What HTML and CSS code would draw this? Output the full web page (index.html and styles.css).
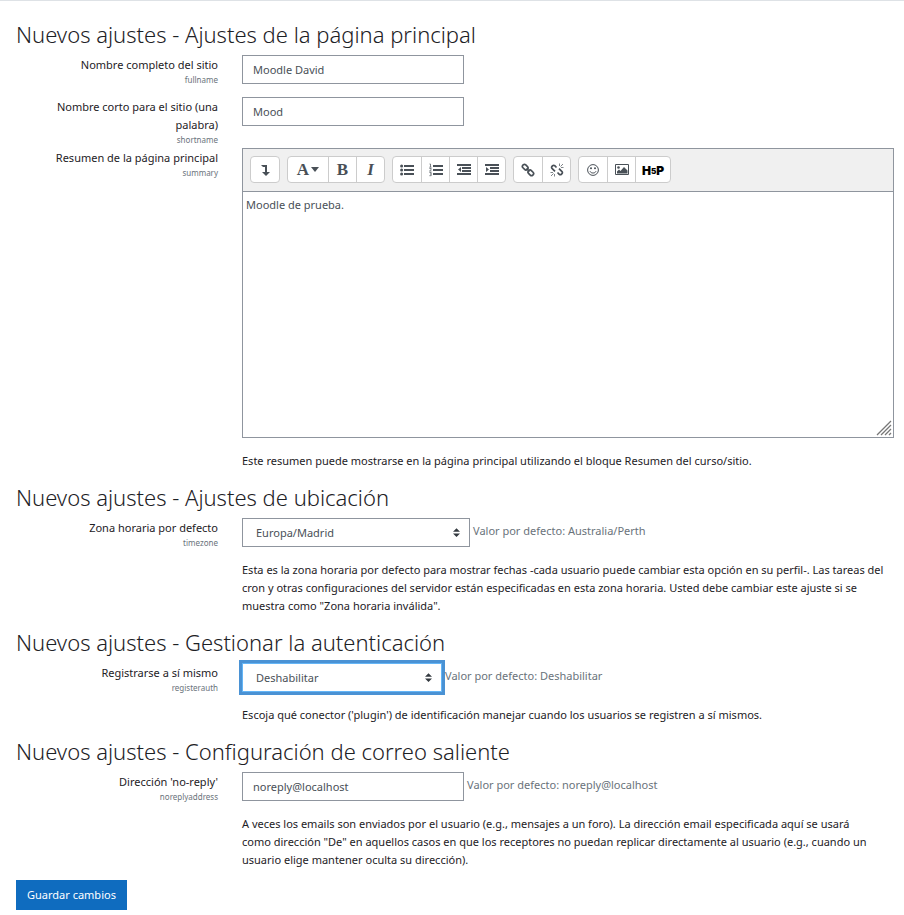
FILE: index.html
```html
<!DOCTYPE html>
<html lang="es">
<head>
<meta charset="utf-8">
<meta name="viewport" content="width=device-width, initial-scale=1">
<title>Nuevos ajustes</title>
<link rel="stylesheet" href="styles.css">
</head>
<body>
<form class="settings">
  <section>
    <h3>Nuevos ajustes - Ajustes de la página principal</h3>
    <div class="row">
      <div class="label"><label for="fullname">Nombre completo del sitio</label><span class="key">fullname</span></div>
      <div class="field"><div class="control"><input class="text" type="text" id="fullname" value="Moodle David"></div></div>
    </div>
    <div class="row">
      <div class="label"><label for="shortname">Nombre corto para el sitio (una palabra)</label><span class="key">shortname</span></div>
      <div class="field"><div class="control"><input class="text" type="text" id="shortname" value="Mood"></div></div>
    </div>
    <div class="row">
      <div class="label"><label for="summary">Resumen de la página principal</label><span class="key">summary</span></div>
      <div class="field">
        <div class="editor">
          <div class="toolbar">
            <div class="group">
              <button type="button" aria-label="Mostrar más botones"><svg width="14" height="14" viewBox="0 0 14 14"><path d="M3 2h6v7h3l-4 4-4-4h3V4H5z"/></svg></button>
            </div>
            <div class="group">
              <button type="button" class="wide" aria-label="Estilos de párrafo"><span class="glyph">A</span><svg width="8" height="5" viewBox="0 0 8 5"><path d="M0 0h8L4 5z"/></svg></button>
              <button type="button" aria-label="Negrita"><span class="glyph">B</span></button>
              <button type="button" aria-label="Cursiva"><span class="glyph italic">I</span></button>
            </div>
            <div class="group">
              <button type="button" aria-label="Lista"><svg width="14" height="14" viewBox="0 0 14 14"><circle cx="1.6" cy="3" r="1.5"/><circle cx="1.6" cy="7" r="1.5"/><circle cx="1.6" cy="11" r="1.5"/><path d="M4 2h10v2H4zM4 6h10v2H4zM4 10h10v2H4z"/></svg></button>
              <button type="button" aria-label="Lista numerada"><svg width="14" height="14" viewBox="0 0 14 14"><path d="M4 2h10v2H4zM4 6h10v2H4zM4 10h10v2H4z"/><path class="thin" d="M.5 1h1v3M.3 4.200h2.200M.4 5.500h1.800v1L.5 8h2M.4 9.500h1.800v3.200H.4M1 11h1"/></svg></button>
              <button type="button" aria-label="Reducir sangría"><svg width="14" height="14" viewBox="0 0 14 14"><path d="M0 1h14v2H0zM5 4h9v2H5zM5 7h9v2H5zM0 10h14v2H0zM4 4v5L1 6.500z"/></svg></button>
              <button type="button" aria-label="Aumentar sangría"><svg width="14" height="14" viewBox="0 0 14 14"><path d="M0 1h14v2H0zM5 4h9v2H5zM5 7h9v2H5zM0 10h14v2H0zM1 4v5l3-2.500z"/></svg></button>
            </div>
            <div class="group">
              <button type="button" aria-label="Enlace"><svg width="14" height="14" viewBox="0 0 14 14"><g class="chain"><rect x="1.200" y="2.200" width="6" height="4" rx="1.800" transform="rotate(45 4.200 4.200)"/><rect x="6.800" y="7.800" width="6" height="4" rx="1.800" transform="rotate(45 9.800 9.800)"/><path d="M5.500 5.500l3 3"/></g></svg></button>
              <button type="button" aria-label="Desenlazar"><svg width="14" height="14" viewBox="0 0 14 14"><path class="chain" d="M6.500 4.500L4.700 2.700a1.400 1.400 0 0 0-2 0l-.7.700a1.400 1.400 0 0 0 0 2L5 8.400M9 5.600l3 3a1.400 1.400 0 0 1 0 2l-.7.700a1.400 1.400 0 0 1-2 0L7.500 9.500"/><path class="thin" d="M4.500 .5V3M.5 4.500H3M1 1l2.500 2.500M9.500 11v2.500M11 9.500h2.500M10.500 10.500L13 13" transform="rotate(90 7 7)"/></svg></button>
            </div>
            <div class="group">
              <button type="button" aria-label="Emoticonos"><svg width="14" height="14" viewBox="0 0 14 14"><circle class="line" cx="7" cy="7" r="5.400"/><circle cx="5" cy="5.300" r="1"/><circle cx="9" cy="5.300" r="1"/><path class="line" d="M4 8.300c1 2.300 5 2.300 6 0"/></svg></button>
              <button type="button" aria-label="Imagen"><svg width="16" height="14" viewBox="0 0 16 14"><path class="line" d="M1.500 1.500h13v10h-13z"/><circle cx="4.500" cy="4.500" r="1.300"/><path d="M3 10.500V8.500l2-2 1.500 1.500L10 4l3.500 3.500v3z"/></svg></button>
              <button type="button" class="h5p" aria-label="H5P"><span>H</span><span class="five">5</span><span>P</span></button>
            </div>
          </div>
          <textarea id="summary">Moodle de prueba.</textarea>
          <svg class="grip" width="16" height="16" viewBox="0 0 16 16"><path d="M1 15L15 1M5 15L15 5M9 15l6-6M13 15l2-2"/></svg>
        </div>
        <p>Este resumen puede mostrarse en la página principal utilizando el bloque Resumen del curso/sitio.</p>
      </div>
    </div>
  </section>
  <section>
    <h3>Nuevos ajustes - Ajustes de ubicación</h3>
    <div class="row">
      <div class="label"><label for="timezone">Zona horaria por defecto</label><span class="key">timezone</span></div>
      <div class="field">
        <div class="control"><select id="timezone" class="zone"><option>Europa/Madrid</option></select><span class="default">Valor por defecto: Australia/Perth</span></div>
        <p>Esta es la zona horaria por defecto para mostrar fechas -cada usuario puede cambiar esta opción en su perfil-. Las tareas del cron y otras configuraciones del servidor están especificadas en esta zona horaria. Usted debe cambiar este ajuste si se muestra como "Zona horaria inválida".</p>
      </div>
    </div>
  </section>
  <section>
    <h3>Nuevos ajustes - Gestionar la autenticación</h3>
    <div class="row">
      <div class="label"><label for="registerauth">Registrarse a sí mismo</label><span class="key">registerauth</span></div>
      <div class="field">
        <div class="control"><select id="registerauth" class="focused"><option>Deshabilitar</option></select><span class="default">Valor por defecto: Deshabilitar</span></div>
        <p>Escoja qué conector ('plugin') de identificación manejar cuando los usuarios se registren a sí mismos.</p>
      </div>
    </div>
  </section>
  <section>
    <h3>Nuevos ajustes - Configuración de correo saliente</h3>
    <div class="row">
      <div class="label"><label for="noreplyaddress">Dirección 'no-reply'</label><span class="key">noreplyaddress</span></div>
      <div class="field">
        <div class="control"><input class="text" type="text" id="noreplyaddress" value="noreply@localhost"><span class="default">Valor por defecto: noreply@localhost</span></div>
        <p>A veces los emails son enviados por el usuario (e.g., mensajes a un foro). La dirección email especificada aquí se usará como&nbsp;dirección "De" en aquellos casos en que los receptores no puedan replicar directamente al usuario (e.g., cuando un usuario&nbsp;elige mantener oculta su dirección).</p>
      </div>
    </div>
  </section>
  <button type="submit" class="save">Guardar cambios</button>
</form>
</body>
</html>
```
FILE: styles.css
```css
* { box-sizing: border-box; }
body {
  margin: 0;
  border-top: 1px solid #dee2e6;
  background: #fff;
  color: #1d2125;
  font: 11px/18px "Noto Sans", "Open Sans", sans-serif;
}
input, select, textarea, button { font: inherit; color: #495057; margin: 0; }
.settings { padding: 6px 10px 4px 0; }
h3 {
  margin: 8px 0 0 16px;
  padding-bottom: 2px;
  font-size: 22px;
  line-height: 38px;
  font-weight: 300;
}
.row { display: grid; grid-template-columns: 226px 1fr; min-height: 42px; }
.label { padding: 1px 8px 0 16px; text-align: right; }
.label label { display: block; }
.key { display: block; padding-bottom: 2px; font-size: 8px; line-height: 12px; color: #6a737b; }
.field { padding-left: 16px; min-width: 0; }
.control { display: flex; gap: 3px; }
.text, select {
  height: 29px;
  padding: 0 10px;
  border: 1px solid #8f959e;
  border-radius: 0;
  background: #fff;
}
.text { width: 222px; }
select {
  appearance: none;
  width: 200px;
  padding: 0 13px;
  background: #fff url("data:image/svg+xml,%3Csvg xmlns='http://www.w3.org/2000/svg' viewBox='0 0 8 10'%3E%3Cpath fill='%23343a40' d='M4 0L0 4h8zm0 10L0 6h8z'/%3E%3C/svg%3E") no-repeat right 9px center / 7px 9px;
}
.zone { width: 228px; }
.focused { border-color: #64b5f6; box-shadow: 0 0 0 3px #4a92d4; outline: 0; }
.default { line-height: 26px; color: #6a737b; }
p { margin: 14px 0 0; }

.editor { position: relative; border: 1px solid #8f959e; }
.toolbar {
  display: flex;
  flex-wrap: wrap;
  gap: 7px;
  padding: 7px 7px 8px;
  background: #f0f0f0;
  border-bottom: 1px solid #8f959e;
}
.group {
  display: flex;
  border: 1px solid #ccc;
  border-radius: 4px;
  background: #fff;
}
.group button {
  display: flex;
  align-items: center;
  justify-content: center;
  width: 28px;
  height: 25px;
  padding: 0;
  border: 0;
  background: none;
}
.group button + button { border-left: 1px solid #ccc; }
.group .wide { width: 40px; gap: 2px; }
.group .h5p { width: 35px; padding-top: 2px; }
.group svg { fill: #495057; }
.group .line { fill: none; stroke: #495057; }
.group .thin { fill: none; stroke: #495057; stroke-width: 0.7; }
.chain { fill: none; stroke: #495057; stroke-width: 1.7; }
.glyph { font: bold 17px/20px "Liberation Serif", serif; }
.italic { font-style: italic; }
.h5p span { font: 900 12px/20px Inter, "Liberation Sans", sans-serif; color: #000; }
.h5p .five { font-size: 8px; }
textarea {
  display: block;
  width: 100%;
  height: 245px;
  padding: 4px 3px;
  border: 0;
  outline: 0;
  resize: none;
}
.grip { position: absolute; right: 1px; bottom: 1px; stroke: #777; stroke-width: 1.3; }
.save {
  display: block;
  height: 30px;
  margin: 11px 0 0 16px;
  padding: 0 11px;
  border: 0;
  background: #0f6cbf;
  color: #fff;
}
```
